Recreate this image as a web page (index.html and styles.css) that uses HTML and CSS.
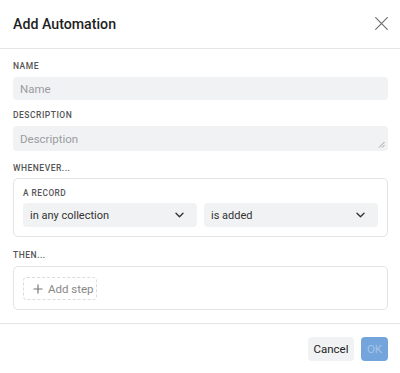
FILE: index.html
```html
<!DOCTYPE html>
<html>
<head>
<meta charset="utf-8">
<link rel="stylesheet" href="styles.css">
</head>
<body>
<div class="dialog">
  <div class="header">
    <div class="title">Add Automation</div>
    <svg class="close" width="13" height="13" viewBox="0 0 13 13"><path d="M0.7 0.7L12.3 12.3M12.3 0.7L0.7 12.3" stroke="#707070" stroke-width="1.2" fill="none" stroke-linecap="round"/></svg>
  </div>
  <div class="content">
    <div class="label l-name">NAME</div>
    <div class="input"><span class="ph">Name</span></div>
    <div class="label l-desc">DESCRIPTION</div>
    <div class="input textarea"><span class="ph">Description</span>
      <svg class="grip" width="7" height="7" viewBox="0 0 7 7"><path d="M1 6.5L6.5 1M4 6.5L6.5 4" stroke="#888" stroke-width="0.8"/></svg>
    </div>
    <div class="label l-when">WHENEVER...</div>
    <div class="box box-when">
      <div class="label sub">A RECORD</div>
      <div class="selects">
        <div class="select"><span>in any collection</span><svg width="9" height="6" viewBox="0 0 9 6"><path d="M1 1.2L4.5 4.7L8 1.2" stroke="#333" stroke-width="1.4" fill="none" stroke-linecap="round" stroke-linejoin="round"/></svg></div>
        <div class="select"><span>is added</span><svg width="9" height="6" viewBox="0 0 9 6"><path d="M1 1.2L4.5 4.7L8 1.2" stroke="#333" stroke-width="1.4" fill="none" stroke-linecap="round" stroke-linejoin="round"/></svg></div>
      </div>
    </div>
    <div class="label l-then">THEN...</div>
    <div class="box box-then">
      <div class="addstep"><svg width="10" height="10" viewBox="0 0 10 10"><path d="M5 0.5V9.5M0.5 5H9.5" stroke="#777" stroke-width="1.2"/></svg><span>Add step</span></div>
    </div>
  </div>
  <div class="footer">
    <div class="btn cancel">Cancel</div>
    <div class="btn ok">OK</div>
  </div>
</div>
</body>
</html>
```
FILE: styles.css
```css
* { box-sizing: border-box; }
html, body { margin: 0; padding: 0; background: #fff; }
body { font-family: Roboto, "Noto Sans", sans-serif; color: #222; width: 400px; height: 373px; overflow: hidden; }
.dialog { display: flex; flex-direction: column; }
.header { height: 49px; border-bottom: 1px solid #e6e6e6; display: flex; align-items: center; justify-content: space-between; padding: 0 12px 1px 13px; }
.title { font-size: 14.2px; font-weight: 500; color: #1e1e1e; }
.close { display: block; }
.content { padding: 11px 12px 0 13px; display: flex; flex-direction: column; }
.label { font-size: 8.5px; font-weight: 500; color: #555; letter-spacing: 0.5px; line-height: 12px; }
.l-name { margin-bottom: 5px; }
.l-desc { margin-top: 9px; margin-bottom: 5px; }
.l-when { margin-top: 11px; margin-bottom: 4px; }
.l-then { margin-top: 12px; margin-bottom: 5px; }
.input { height: 23px; background: #f1f2f4; border-radius: 4px; display: flex; align-items: center; padding-left: 7px; font-size: 11.5px; position: relative; }
.textarea { height: 25px; }
.ph { color: #9a9ca0; }
.grip { position: absolute; right: 3px; bottom: 3px; }
.box { border: 1px solid #e3e3e5; border-radius: 5px; }
.box-when { height: 59px; padding: 8px 9px 0 9px; }
.sub { font-size: 8.3px; color: #555; margin-bottom: 4px; }
.selects { display: flex; gap: 7px; }
.select { flex: 1; height: 24px; background: #f1f2f4; border-radius: 4px; display: flex; align-items: center; justify-content: space-between; padding: 0 13px 0 7px; font-size: 11px; color: #333; }
.select svg { display: block; }
.box-then { height: 44px; padding: 10px 9px 0 9px; }
.addstep { width: 74px; height: 23px; border: 1px dashed #dcdcde; border-radius: 4px; display: flex; align-items: center; padding-left: 9px; gap: 5px; font-size: 11.5px; color: #888; white-space: nowrap; }
.addstep svg { display: block; flex: none; }
.footer { margin-top: 13px; border-top: 1px solid #e6e6e6; display: flex; justify-content: flex-end; gap: 7px; padding: 13px 12px 0 0; }
.btn { height: 24px; border-radius: 4px; display: flex; align-items: center; justify-content: center; font-size: 11.5px; }
.cancel { width: 46px; background: #f1f2f4; color: #222; }
.ok { width: 27px; background: #73a5dc; color: #a5c4e6; }
```
